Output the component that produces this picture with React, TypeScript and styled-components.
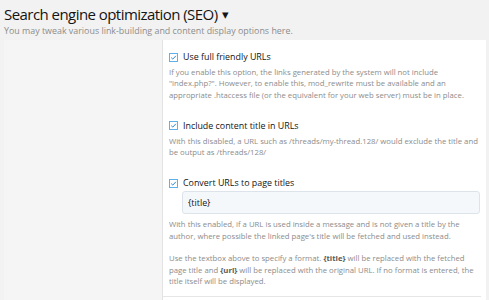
import React from "react";
import styled, { createGlobalStyle } from "styled-components";

const GlobalStyle = createGlobalStyle`
  html, body {
    margin: 0;
    padding: 0;
    overflow: hidden;
    background: #f2f2f2;
    font-family: "Open Sans", "Noto Sans", sans-serif;
    color: #141414;
  }
`;

type Option = {
  label: string;
  description: React.ReactNode;
  input?: string;
};

const options: Option[] = [
  {
    label: "Use full friendly URLs",
    description: (
      <>
        If you enable this option, the links generated by the system will not
        include "index.php?". However, to enable this, mod_rewrite must be
        available and an appropriate .htaccess file (or the equivalent for your
        web server) must be in place.
      </>
    ),
  },
  {
    label: "Include content title in URLs",
    description: (
      <>
        With this disabled, a URL such as /threads/my-thread.128/ would exclude
        the title and be output as /threads/128/
      </>
    ),
  },
  {
    label: "Convert URLs to page titles",
    input: "{title}",
    description: (
      <>
        With this enabled, if a URL is used inside a message and is not given a
        title by the author, where possible the linked page's title will be
        fetched and used instead.
        <br />
        <br />
        Use the textbox above to specify a format. <b>{"{title}"}</b> will be
        replaced with the fetched page title and <b>{"{url}"}</b> will be
        replaced with the original URL. If no format is entered, the title
        itself will be displayed.
      </>
    ),
  },
];

const CheckIcon = () => (
  <svg width="9" height="9" viewBox="0 0 9 9">
    <rect x="0.5" y="0.5" width="8" height="8" fill="#fff" stroke="#5fb0e6" />
    <path d="M2.2 4.6 L3.8 6.1 L6.9 2.8" fill="none" stroke="#2b8ad6" strokeWidth="1" />
  </svg>
);

export default function App() {
  return (
    <>
      <GlobalStyle />
      <Header>
        <Title>
          Search engine optimization (SEO)
          <Caret>▾</Caret>
        </Title>
        <Subtitle>
          You may tweak various link-building and content display options here.
        </Subtitle>
      </Header>
      <Block>
        <Sidebar />
        <Panel>
          <Row>
            {options.map((o) => (
              <Option key={o.label}>
                <CheckLabel>
                  <CheckIcon />
                  <span>{o.label}</span>
                </CheckLabel>
                {o.input && <TextBox>{o.input}</TextBox>}
                <Hint>{o.description}</Hint>
              </Option>
            ))}
          </Row>
        </Panel>
      </Block>
    </>
  );
}

const Header = styled.div`
  padding: 3px 4px 0 4px;
  height: 37px;
`;

const Title = styled.h1`
  margin: 0;
  font-size: 15px;
  letter-spacing: -0.55px;
  font-weight: 400;
  line-height: 22px;
  color: #141414;
  display: flex;
  align-items: center;
`;

const Caret = styled.span`
  font-size: 13px;
  margin-left: 4px;
`;

const Subtitle = styled.div`
  font-size: 8.9px;
  line-height: 12px;
  color: #8c8c8c;
`;

const Block = styled.div`
  margin: 0 3px 0 4px;
  display: grid;
  grid-template-columns: 159px 1fr;
  min-height: 300px;
  background: #fff;
`;

const Sidebar = styled.div`
  background: #f5f5f5;
  border-right: 1px solid #e3e3e3;
`;

const Panel = styled.div`
  background: #fff;
`;

const Row = styled.div`
  padding: 10px 1px 0 5px;
  border-bottom: 1px solid #e6e6e6;
  margin-right: 5px;
`;

const Option = styled.div`
  padding-bottom: 18px;
  &:last-child {
    padding-bottom: 9px;
  }
`;

const CheckLabel = styled.label`
  display: flex;
  align-items: center;
  gap: 5px;
  padding-left: 1px;
  font-size: 8.9px;
  line-height: 14px;
  color: #141414;
`;

const TextBox = styled.div`
  margin: 1px 0 5px 14px;
  height: 23px;
  box-sizing: border-box;
  padding: 0 5px;
  display: flex;
  align-items: center;
  background: #f5f8fb;
  border: 1px solid #dde3ea;
  border-radius: 3px;
  font-size: 8.9px;
  color: #141414;
`;

const Hint = styled.div`
  margin-top: 3px;
  padding-left: 1px;
  font-size: 7.75px;
  line-height: 11.3px;
  color: #8c8c8c;
  b {
    color: #5a5a5a;
  }
`;
